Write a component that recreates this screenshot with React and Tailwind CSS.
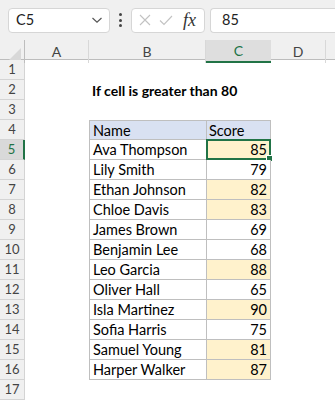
import React from "react";

const data = [
  ["Ava Thompson", 85],
  ["Lily Smith", 79],
  ["Ethan Johnson", 82],
  ["Chloe Davis", 83],
  ["James Brown", 69],
  ["Benjamin Lee", 68],
  ["Leo Garcia", 88],
  ["Oliver Hall", 65],
  ["Isla Martinez", 90],
  ["Sofia Harris", 75],
  ["Samuel Young", 81],
  ["Harper Walker", 87],
];

const font = { fontFamily: "Lato, 'Open Sans', sans-serif" };

function RowHead({ n, active }) {
  return (
    <div
      className={
        "h-[20px] flex items-center justify-center text-[13px] border-b border-r border-[#d4d4d4] " +
        (active ? "bg-[#d9d9d9] text-[#217346] border-r-2 border-r-[#217346]" : "bg-[#f0f0f0] text-[#444]")
      }
    >
      {n}
    </div>
  );
}

export default function App() {
  const rows = [];
  for (let r = 1; r <= 17; r++) {
    let b = null;
    let c = null;
    if (r === 2) {
      b = (
        <div className="h-[20px] pl-[3px] pt-[1px] flex items-center font-bold text-[14px] whitespace-nowrap text-black">
          If cell is greater than 80
        </div>
      );
    } else if (r === 4) {
      b = (
        <div className="h-[20px] pl-[3px] pt-[1px] flex items-center text-[14.5px] bg-[#d9e1f2] border-l border-t border-b border-[#bfbfbf]">
          Name
        </div>
      );
      c = (
        <div className="h-[20px] pl-[2px] pt-[1px] flex items-center text-[14.5px] bg-[#d9e1f2] border-l border-r border-t border-b border-[#bfbfbf]">
          Score
        </div>
      );
    } else if (r >= 5 && r <= 16) {
      const [name, score] = data[r - 5];
      const hi = score > 80;
      b = (
        <div className="h-[20px] pl-[3px] pt-[1px] flex items-center text-[14.5px] border-l border-b border-[#bfbfbf] whitespace-nowrap">
          {name}
        </div>
      );
      c = (
        <div
          className={
            "relative h-[20px] pr-[3px] pt-[1px] flex items-center justify-end text-[14.5px] border-l border-r border-b border-[#bfbfbf] " +
            (hi ? "bg-[#fff2cc]" : "bg-white")
          }
        >
          {score}
          {r === 5 && (
            <>
              <div className="absolute left-[-1px] top-[-1px] right-[-1px] bottom-[-1px] border-2 border-[#217346]" />
              <div className="absolute right-[-3px] bottom-[-3px] w-[5px] h-[5px] bg-[#217346] border border-white box-content" />
            </>
          )}
        </div>
      );
    }
    rows.push(
      <div key={r} className="grid grid-cols-[25px_64px_117px_65px_1fr]">
        <RowHead n={r} active={r === 5} />
        <div />
        <div>{b}</div>
        <div>{c}</div>
        <div />
      </div>
    );
  }

  return (
    <div className="w-[335px] h-[400px] overflow-hidden bg-white text-black" style={font}>
      {/* formula bar */}
      <div className="h-[40px] bg-[#f0f0f0] flex items-center pl-[8px] gap-0">
        <div className="w-[102px] h-[25px] bg-white border border-[#d6d6d6] rounded-[4px] flex items-center justify-between pl-[7px] pr-[6px] text-[14.5px] text-[#222]">
          <span>C5</span>
          <svg width="12" height="8" viewBox="0 0 12 8" fill="none" stroke="#555" strokeWidth="1.2">
            <path d="M1.5 2 L6 6.2 L10.5 2" />
          </svg>
        </div>
        <div className="w-[20px] flex flex-col items-center gap-[2.5px]">
          <div className="w-[3px] h-[3px] bg-[#444] rounded-full" />
          <div className="w-[3px] h-[3px] bg-[#444] rounded-full" />
          <div className="w-[3px] h-[3px] bg-[#444] rounded-full" />
        </div>
        <div className="w-[74px] h-[25px] bg-white border border-[#d6d6d6] rounded-[4px] flex items-center pl-[7px] pr-[3px] ml-[1px]">
          <svg width="12" height="12" viewBox="0 0 12 12" stroke="#c2c2c2" strokeWidth="1.1" fill="none">
            <path d="M1 1 L11 11 M11 1 L1 11" />
          </svg>
          <svg className="ml-[8px]" width="14" height="11" viewBox="0 0 14 11" stroke="#c2c2c2" strokeWidth="1.1" fill="none">
            <path d="M1 5.5 L5 9.5 L13 1" />
          </svg>
          <span
            className="ml-[10px] text-[18px] italic text-[#333] leading-none"
            style={{ fontFamily: "'Liberation Serif', serif" }}
          >
            fx
          </span>
        </div>
        <div className="flex-1 h-[25px] bg-white border border-[#d6d6d6] border-r-0 rounded-l-[4px] ml-[5px] flex items-center pl-[11px] text-[14.5px] text-[#222]">
          85
        </div>
      </div>
      {/* column headers */}
      <div className="grid grid-cols-[25px_64px_117px_65px_1fr] h-[20px] bg-[#f0f0f0] border-b border-[#bdbdbd] text-[14px] text-[#444]">
        <div className="relative border-r border-[#bdbdbd]">
          <svg className="absolute right-[3px] bottom-[3px]" width="12" height="12" viewBox="0 0 12 12">
            <path d="M12 0 L12 12 L0 12 Z" fill="#d8d8d8" />
          </svg>
        </div>
        <div className="flex items-center justify-center border-r border-[#d8d8d8]">A</div>
        <div className="flex items-center justify-center border-r border-[#d8d8d8]">B</div>
        <div className="flex items-center justify-center bg-[#dedede] text-[#217346] border-b-2 border-[#217346]">C</div>
        <div className="flex items-center justify-center w-[55px] border-r border-[#d8d8d8]">D</div>
      </div>
      {rows}
    </div>
  );
}
